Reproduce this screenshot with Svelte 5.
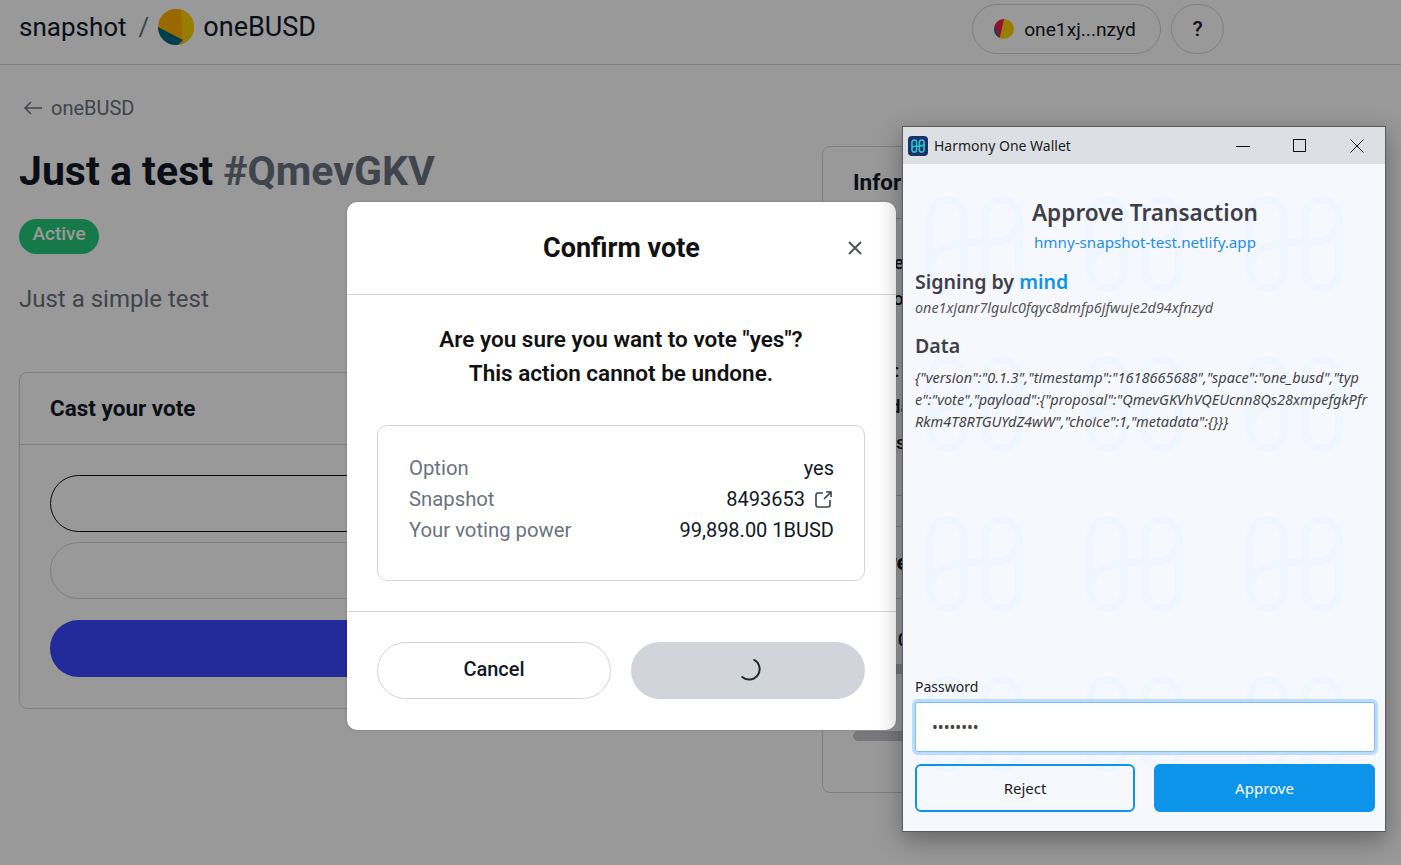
<script lang="ts">
  // Rows of the two sidebar cards, mostly hidden behind the modal and the wallet window
  const infoRows = ['Strategie(s)', 'Author', 'IPFS', 'Start:', 'End date', 'Snapshots'];

  const voteRows = [
    { label: 'Option', value: 'yes' },
    { label: 'Snapshot', value: '8493653', link: true },
    { label: 'Your voting power', value: '99,898.00 1BUSD' },
  ];

  // Pre-broken the way the wallet window wraps the payload
  const dataLines = [
    '{"version":"0.1.3","timestamp":"1618665688","space":"one_busd","typ',
    'e":"vote","payload":{"proposal":"QmevGKVhVQEUcnn8Qs28xmpefgkPfr',
    'Rkm4T8RTGUYdZ4wW","choice":1,"metadata":{}}}',
  ];
</script>

<div class="screen">
  <!-- Snapshot page behind the overlay -->
  <header class="topbar">
    <div class="brand">
      <span class="logo-text">snapshot</span>
      <span class="slash">/</span>
      <svg class="space-avatar" viewBox="0 0 36 36" aria-hidden="true">
        <rect width="36" height="36" fill="#ffb000" />
        <path d="M23 0 L24.5 33 L36 36 L36 0 Z" fill="#ffd000" />
        <path d="M0 18 L25 31 L18 38 L0 36 Z" fill="#006a80" />
      </svg>
      <span>oneBUSD</span>
    </div>
    <div class="account">
      <button class="pill-btn wallet">
        <svg class="user-avatar" viewBox="0 0 20 20" aria-hidden="true">
          <rect width="20" height="20" fill="#ffd000" />
          <path d="M10 0 L0 0 L0 6 L5.5 20 Z" fill="#f0185f" />
          <path d="M0 6 L5.5 20 L0 20 Z" fill="#006a80" />
        </svg>
        one1xj...nzyd
      </button>
      <button class="pill-btn help">?</button>
    </div>
  </header>

  <main class="page">
    <section class="left">
      <div class="back">
        <svg width="18" height="14" viewBox="0 0 18 14" fill="none" stroke="currentColor" stroke-width="1.5" aria-hidden="true">
          <path d="M1 7h17M7 1 1 7l6 6" />
        </svg>
        oneBUSD
      </div>
      <h1>Just a test <span class="hash">#QmevGKV</span></h1>
      <span class="badge">Active</span>
      <p class="body-text">Just a simple test</p>
      <div class="card vote-card">
        <h3 class="card-head">Cast your vote</h3>
        <div class="vote-body">
          <div class="choice selected"></div>
          <div class="choice"></div>
          <div class="vote-btn"></div>
        </div>
      </div>
    </section>

    <aside class="right">
      <div class="card info-card">
        <h3 class="card-head">Information</h3>
        <div class="info-body">
          {#each infoRows as row}
            <div class="info-row">{row}</div>
          {/each}
        </div>
      </div>
      <div class="card results-card">
        <h3 class="card-head">Current results</h3>
        <div class="results-body">
          <div class="info-row">yes 100.00%</div>
          <div class="bar"></div>
          <div class="info-row result-no">no 0 <b>Cancel</b></div>
          <div class="bar"></div>
        </div>
      </div>
    </aside>
  </main>

  <div class="overlay"></div>

  <!-- Confirm vote modal -->
  <div class="modal">
    <div class="modal-head">
      <h2>Confirm vote</h2>
      <svg class="close" viewBox="0 0 14 14" fill="none" stroke="currentColor" stroke-width="2" aria-hidden="true">
        <path d="M1 1l12 12M13 1 1 13" />
      </svg>
    </div>
    <div class="modal-body">
      <p class="question">Are you sure you want to vote "yes"?<br />This action cannot be undone.</p>
      <div class="summary">
        {#each voteRows as row}
          <div class="summary-row">
            <span class="summary-label">{row.label}</span>
            <span class="summary-value">
              {row.value}
              {#if row.link}
                <svg class="ext" viewBox="0 0 17 17" fill="none" stroke="currentColor" stroke-width="1.6" aria-hidden="true">
                  <path d="M8 2H3a2 2 0 0 0-2 2v10a2 2 0 0 0 2 2h10a2 2 0 0 0 2-2V9" />
                  <path d="M11 1h5v5M16 1l-7 7" />
                </svg>
              {/if}
            </span>
          </div>
        {/each}
      </div>
    </div>
    <div class="modal-foot">
      <button class="modal-btn">Cancel</button>
      <button class="modal-btn busy" aria-label="Loading">
        <svg width="24" height="24" viewBox="0 0 24 24" fill="none" stroke="#1f2937" stroke-width="2" stroke-linecap="round" aria-hidden="true">
          <path d="M17.25 2.9 A10.5 10.5 0 1 1 5.25 20" />
        </svg>
      </button>
    </div>
  </div>

  <!-- Harmony wallet popup window -->
  <div class="wallet-window">
    <div class="titlebar">
      <svg class="app-icon" viewBox="0 0 20 20" aria-hidden="true">
        <rect width="20" height="20" rx="4" fill="#1d3068" />
        <g fill="none" stroke="#27c8d6" stroke-width="1.6">
          <rect x="4" y="4" width="4.6" height="12" rx="2.3" />
          <rect x="11.4" y="4" width="4.6" height="12" rx="2.3" />
          <path d="M4 11.5c1-1.5 4-1.5 6-1.5s5 0 6-1.5" />
        </g>
      </svg>
      <span class="win-title">Harmony One Wallet</span>
      <div class="win-controls">
        <svg viewBox="0 0 14 14" fill="none" stroke="#111" aria-hidden="true"><path d="M0 7.5h14" /></svg>
        <svg viewBox="0 0 14 14" fill="none" stroke="#111" aria-hidden="true"><rect x=".5" y=".5" width="12" height="12" /></svg>
        <svg viewBox="0 0 14 14" fill="none" stroke="#111" aria-hidden="true"><path d="M.5.5l13 13M13.5.5l-13 13" /></svg>
      </div>
    </div>

    <div class="win-body">
      <svg class="watermark" width="482" height="667" aria-hidden="true">
        <defs>
          <pattern id="harmony" x="23" y="32" width="160" height="160" patternUnits="userSpaceOnUse">
            <g fill="none" stroke="#f0f6ff" stroke-width="8">
              <rect x="4" y="4" width="34" height="88" rx="17" />
              <rect x="59" y="4" width="34" height="88" rx="17" />
              <path d="M5 66c6-14 20-19 37-19h17c17 0 30-5 34-19" />
            </g>
          </pattern>
        </defs>
        <rect width="482" height="667" fill="url(#harmony)" />
      </svg>

      <div class="win-content">
        <h2 class="approve-title">Approve Transaction</h2>
        <div class="origin">hmny-snapshot-test.netlify.app</div>
        <h3 class="signing">Signing by <span class="accent">mind</span></h3>
        <div class="mono-ish">one1xjanr7lgulc0fqyc8dmfp6jfwuje2d94xfnzyd</div>
        <h3 class="data-title">Data</h3>
        <div class="data-lines">
          {#each dataLines as line}
            <div>{line}</div>
          {/each}
        </div>

        <div class="form">
          <label class="pw-label" for="pw">Password</label>
          <input id="pw" class="pw-input" type="password" value="********" />
          <div class="win-actions">
            <button class="win-btn reject">Reject</button>
            <button class="win-btn approve">Approve</button>
          </div>
        </div>
      </div>
    </div>
  </div>
</div>

<style>
  :global(body) {
    margin: 0;
  }

  .screen {
    position: relative;
    width: 1401px;
    height: 865px;
    overflow: hidden;
    background: #fff;
    color: #111827;
    font-family: Roboto, "Liberation Sans", sans-serif;
  }

  h1, h2, h3, p {
    margin: 0;
  }

  /* ── Top bar ─────────────────────────────────────────── */
  .topbar {
    box-sizing: border-box;
    height: 65px;
    padding: 4px 177px 0 19px;
    display: flex;
    justify-content: space-between;
    border-bottom: 1px solid #d1d5db;
  }

  .brand {
    display: flex;
    align-items: center;
    height: 46px;
    font-size: 27px;
  }

  .logo-text {
    font-size: 26px;
  }

  .slash {
    margin: 0 9px 0 12px;
    font-size: 26px;
    color: #6b7280;
  }

  .space-avatar {
    width: 36px;
    height: 36px;
    margin-right: 9px;
    border-radius: 50%;
  }

  .account {
    display: flex;
    gap: 10px;
  }

  .pill-btn {
    height: 50px;
    box-sizing: border-box;
    background: transparent;
    border: 1px solid #d1d5db;
    border-radius: 25px;
    font: inherit;
    font-size: 21px;
    color: #111827;
    display: flex;
    align-items: center;
    justify-content: center;
    padding: 0;
  }

  .wallet {
    width: 189px;
    gap: 10px;
    padding-right: 3px;
    font-size: 19.2px;
  }

  .help {
    width: 53px;
    font-weight: 500;
  }

  .user-avatar {
    width: 20px;
    height: 20px;
    border-radius: 50%;
  }

  /* ── Page columns ────────────────────────────────────── */
  .page {
    display: flex;
    gap: 31px;
    padding: 0 19px;
  }

  .left {
    width: 772px;
    flex: none;
  }

  .right {
    flex: 1;
    padding-top: 81px;
    display: flex;
    flex-direction: column;
    gap: 30px;
  }

  .back {
    display: flex;
    align-items: center;
    gap: 9px;
    margin: 30px 0 0 5px;
    height: 26px;
    font-size: 20px;
    color: #6b7280;
  }

  h1 {
    margin-top: 27px;
    height: 46px;
    line-height: 46px;
    font-size: 41px;
    font-weight: 700;
  }

  .hash {
    color: #6b7280;
  }

  .badge {
    display: inline-block;
    box-sizing: border-box;
    width: 80px;
    height: 35px;
    margin-top: 25px;
    border-radius: 18px;
    background: #25ca7b;
    color: #fff;
    text-align: center;
    font-size: 19px;
    font-weight: 500;
    line-height: 30px;
  }

  .body-text {
    margin-top: 27px;
    height: 36px;
    line-height: 36px;
    font-size: 24px;
    color: #6b7280;
  }

  /* ── Cards ───────────────────────────────────────────── */
  .card {
    box-sizing: border-box;
    border: 1px solid #d1d5db;
    border-radius: 8px;
  }

  .card-head {
    box-sizing: border-box;
    height: 72px;
    padding: 0 30px;
    line-height: 70px;
    font-size: 22.5px;
    font-weight: 700;
    border-bottom: 1px solid #d1d5db;
  }

  .vote-card {
    margin-top: 55px;
    height: 337px;
  }

  .vote-body {
    padding: 30px;
    display: flex;
    flex-direction: column;
  }

  .choice {
    box-sizing: border-box;
    height: 57px;
    border: 1px solid #d1d5db;
    border-radius: 29px;
    margin-bottom: 10px;
  }

  .choice.selected {
    border-color: #111;
  }

  .vote-btn {
    height: 57px;
    margin-top: 11px;
    border-radius: 29px;
    background: #3948ff;
  }

  .info-card {
    height: 350px;
  }

  .results-card {
    height: 267px;
  }

  .info-body {
    padding: 26px 30px 0;
  }

  .results-body {
    padding: 23px 30px 0;
  }

  .info-row {
    height: 36px;
    line-height: 36px;
    font-size: 19px;
    font-weight: 500;
    white-space: nowrap;
  }

  .bar {
    height: 10px;
    margin-top: 6px;
    border-radius: 5px;
    background: #c6c9ce;
  }

  .result-no {
    margin-top: 15px;
  }

  .result-no b {
    font-weight: 500;
    margin-left: 12px;
  }

  .overlay {
    position: absolute;
    inset: 0;
    background: rgba(0, 0, 0, 0.4);
  }

  /* ── Confirm modal ───────────────────────────────────── */
  .modal {
    position: absolute;
    left: 347px;
    top: 202px;
    width: 549px;
    height: 528px;
    display: flex;
    flex-direction: column;
    background: #fff;
    border-radius: 10px;
    box-shadow: 0 0 3px rgba(0, 0, 0, 0.2);
  }

  .modal-head {
    position: relative;
    height: 93px;
    box-sizing: border-box;
    border-bottom: 1px solid #d1d5db;
    text-align: center;
  }

  .modal-head h2 {
    line-height: 92px;
    font-size: 27px;
    font-weight: 700;
    color: #111;
  }

  .close {
    position: absolute;
    right: 34px;
    top: 39px;
    width: 14px;
    height: 14px;
    color: #4b5563;
  }

  .modal-body {
    flex: 1;
    padding: 27px 31px 0 30px;
  }

  .question {
    text-align: center;
    font-size: 22.5px;
    font-weight: 600;
    line-height: 34px;
    color: #111;
  }

  .summary {
    box-sizing: border-box;
    height: 156px;
    margin-top: 35px;
    padding: 27px 30px 0 31px;
    border: 1px solid #d1d5db;
    border-radius: 10px;
  }

  .summary-row {
    display: flex;
    justify-content: space-between;
    height: 31px;
    line-height: 31px;
    font-size: 20px;
  }

  .summary-label {
    color: #6b7280;
    font-size: 20.3px;
  }

  .summary-value {
    display: flex;
    align-items: center;
    gap: 10px;
  }

  .ext {
    width: 17px;
    height: 17px;
    color: #374151;
    margin-right: 2px;
  }

  .modal-foot {
    height: 119px;
    box-sizing: border-box;
    padding: 30px 31px 30px 30px;
    border-top: 1px solid #d1d5db;
    display: flex;
    gap: 20px;
  }

  .modal-btn {
    flex: none;
    width: 234px;
    height: 57px;
    background: #fff;
    border: 1px solid #d1d5db;
    border-radius: 29px;
    font: inherit;
    font-size: 20px;
    font-weight: 500;
    color: #111827;
    padding: 0 0 4px;
  }

  .busy {
    background: #d1d5db;
    padding: 1px 0 0 2px;
  }

  /* ── Wallet window ───────────────────────────────────── */
  .wallet-window {
    position: absolute;
    left: 902px;
    top: 126px;
    width: 484px;
    height: 706px;
    box-sizing: border-box;
    border: 1px solid #5a5a5a;
    display: flex;
    flex-direction: column;
    background: #f7f8fe;
    box-shadow: 0 8px 24px rgba(0, 0, 0, 0.35);
    font-family: "Noto Sans", "Open Sans", sans-serif;
  }

  .titlebar {
    height: 37px;
    flex: none;
    display: flex;
    align-items: center;
    padding-left: 5px;
    background: #dcdfe3;
  }

  .app-icon {
    width: 20px;
    height: 20px;
    margin-right: 6px;
  }

  .win-title {
    flex: 1;
    font-size: 14px;
    color: #1c1c1c;
  }

  .win-controls {
    display: flex;
    gap: 43px;
    padding-right: 21px;
  }

  .win-controls svg {
    width: 14px;
    height: 14px;
  }

  .win-body {
    position: relative;
    flex: 1;
    overflow: hidden;
  }

  .watermark {
    position: absolute;
    left: 0;
    top: 0;
  }

  .win-content {
    position: relative;
    box-sizing: border-box;
    height: 100%;
    padding: 35px 10px 19px 12px;
    display: flex;
    flex-direction: column;
    color: #3f3f46;
  }

  .approve-title {
    text-align: center;
    font-size: 22.6px;
    font-weight: 600;
    line-height: 28px;
    color: #3f3f46;
  }

  .origin {
    margin-top: 4px;
    text-align: center;
    font-size: 15.2px;
    line-height: 22px;
    color: #1b8fe6;
  }

  .signing {
    margin-top: 16px;
    font-size: 19.6px;
    font-weight: 600;
    line-height: 26px;
  }

  .accent {
    color: #0b94ea;
  }

  .mono-ish {
    margin-top: 3px;
    font-size: 14.4px;
    font-style: italic;
    line-height: 20px;
    color: #555;
    white-space: nowrap;
  }

  .data-title {
    margin-top: 15px;
    font-size: 19.6px;
    font-weight: 600;
    line-height: 26px;
  }

  .data-lines {
    margin-top: 7px;
    font-size: 14.5px;
    font-style: italic;
    line-height: 22px;
    color: #444;
    white-space: nowrap;
  }

  .form {
    margin-top: auto;
    display: flex;
    flex-direction: column;
  }

  .pw-label {
    font-size: 14px;
    line-height: 20px;
    color: #222;
  }

  .pw-input {
    box-sizing: border-box;
    height: 50px;
    margin-top: 5px;
    padding: 0 16px;
    font-size: 15.5px;
    font-family: inherit;
    color: #444;
    background: #fff;
    border: 1px solid #7cbdf8;
    border-radius: 3px;
    box-shadow: 0 0 0 3px #b9dcff;
    outline: none;
  }

  .win-actions {
    display: flex;
    gap: 19px;
    margin-top: 12px;
  }

  .win-btn {
    height: 48px;
    box-sizing: border-box;
    border-radius: 6px;
    font: inherit;
    font-size: 15px;
  }

  .reject {
    width: 220px;
    background: transparent;
    border: 2px solid #0b94ea;
    color: #222;
  }

  .approve {
    width: 221px;
    background: #0b94ea;
    border: 2px solid #0b94ea;
    color: #fff;
  }
</style>
